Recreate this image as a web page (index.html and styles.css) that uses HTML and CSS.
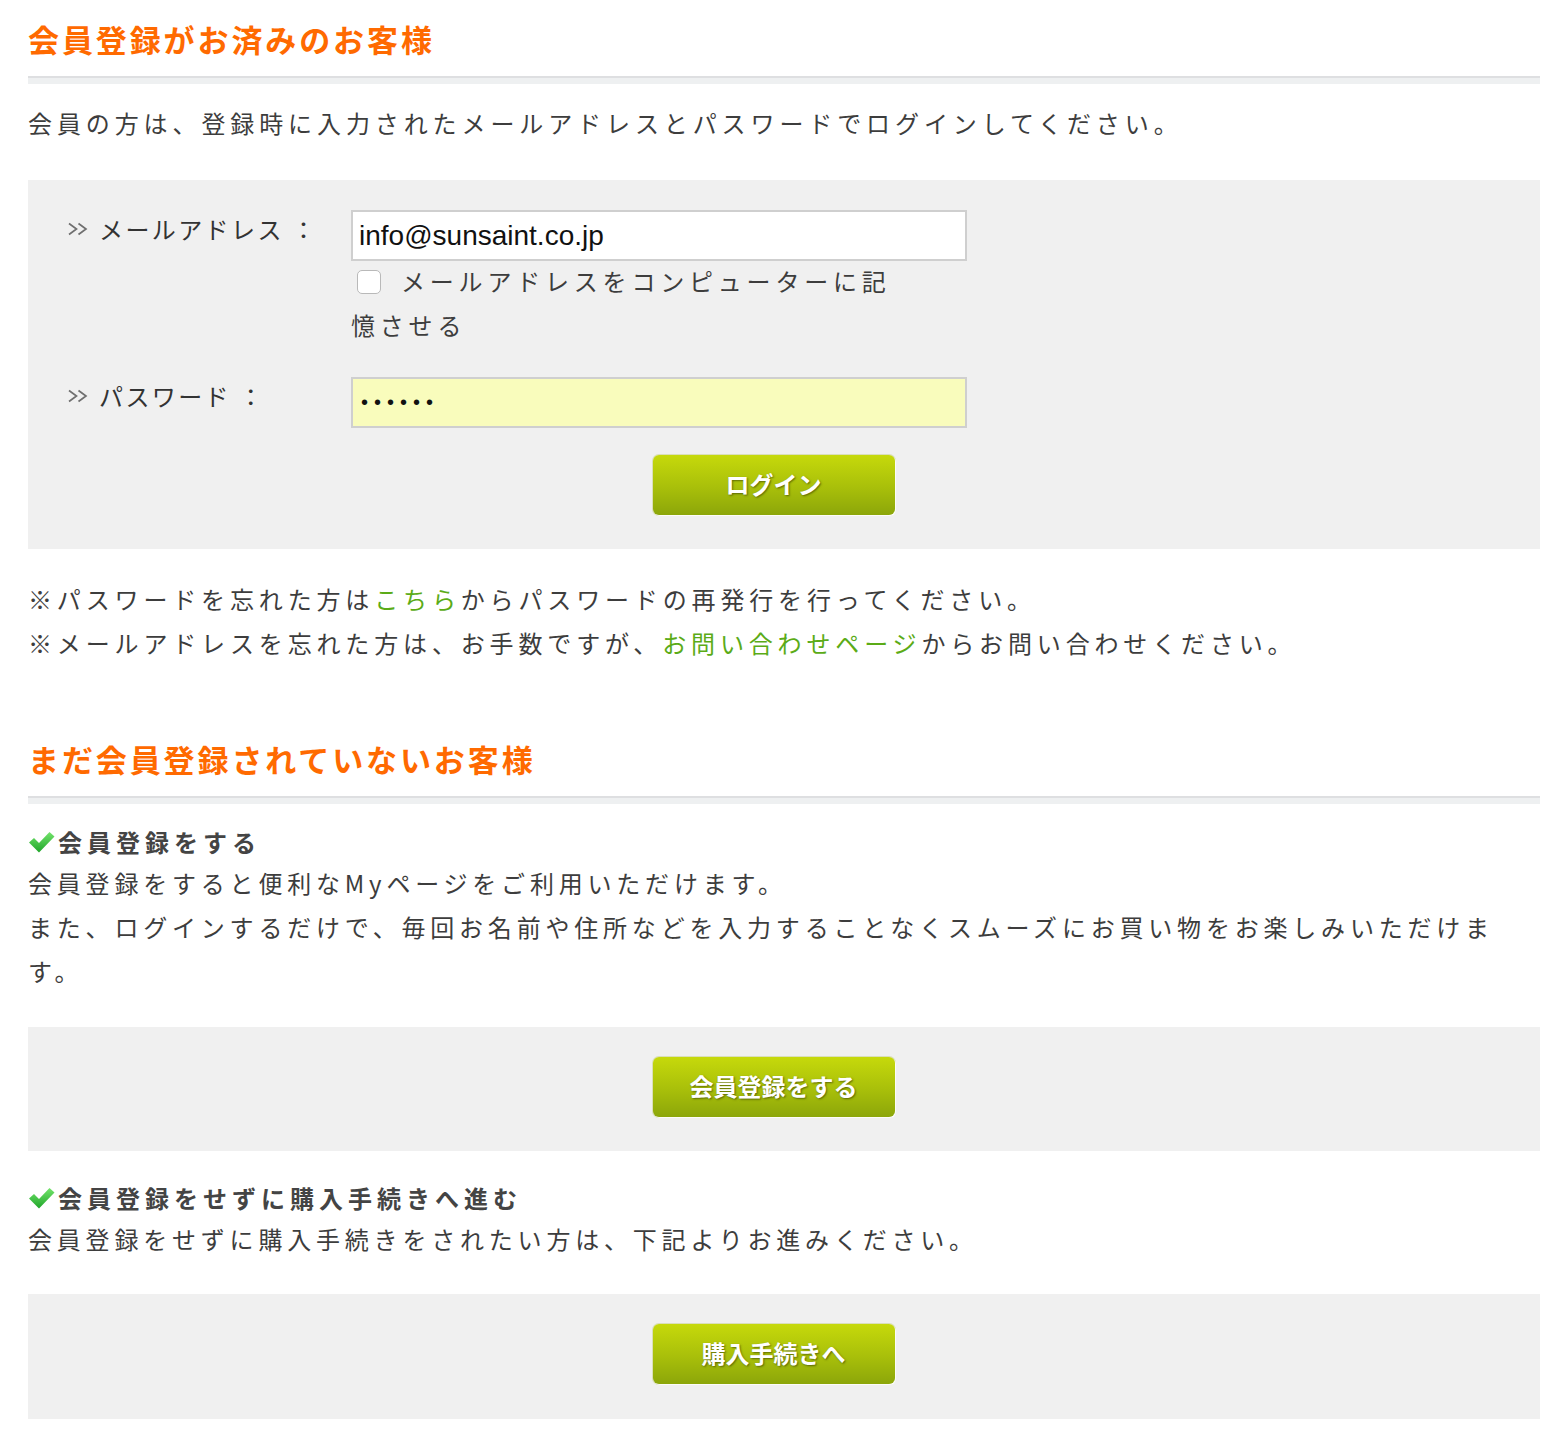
FILE: index.html
```html
<!DOCTYPE html>
<html lang="ja">
<head>
<meta charset="utf-8">
<title>ログイン</title>
<link rel="stylesheet" href="styles.css">
</head>
<body>
<div class="page">
  <h2 class="section-title first">会員登録がお済みのお客様</h2>
  <div class="rule"></div>
  <p class="intro">会員の方は、登録時に入力されたメールアドレスとパスワードでログインしてください。</p>

  <form class="panel login-panel">
    <div class="form-grid">
      <div class="label">
        <svg class="chev" width="22" height="16" viewBox="0 0 22 16"><path d="M1 2.5 L8.5 8 L1 13.5 M10.5 2.5 L18 8 L10.5 13.5" fill="none" stroke="#6f6f6f" stroke-width="1.7"/></svg>
        <span>メールアドレス ：</span>
      </div>
      <div class="field">
        <input class="text-input" type="text" value="info@sunsaint.co.jp">
        <label class="remember"><input class="check" type="checkbox">メールアドレスをコンピューターに記憶させる</label>
      </div>
      <div class="label second">
        <svg class="chev" width="22" height="16" viewBox="0 0 22 16"><path d="M1 2.5 L8.5 8 L1 13.5 M10.5 2.5 L18 8 L10.5 13.5" fill="none" stroke="#6f6f6f" stroke-width="1.7"/></svg>
        <span>パスワード ：</span>
      </div>
      <div class="field second">
        <input class="text-input pass" type="password" value="aaaaaa">
      </div>
    </div>
    <div class="btn-row"><button type="button" class="btn">ログイン</button></div>
  </form>

  <div class="notes">
    <p>※パスワードを忘れた方は<a href="#">こちら</a>からパスワードの再発行を行ってください。</p>
    <p>※メールアドレスを忘れた方は、お手数ですが、<a href="#">お問い合わせページ</a>からお問い合わせください。</p>
  </div>

  <h2 class="section-title second-title">まだ会員登録されていないお客様</h2>
  <div class="rule rule-second"></div>

  <h3 class="sub-title">
    <svg class="check-icon" width="27" height="24" viewBox="0 0 27 24"><defs><linearGradient id="g1" x1="0" y1="0" x2="0" y2="1"><stop offset="0" stop-color="#74e46c"/><stop offset="1" stop-color="#1fa52a"/></linearGradient></defs><path d="M1 12.5 L6 8 L11 13 L21.5 2 L26.5 6.5 L11 22.5 Z" fill="url(#g1)"/></svg>会員登録をする</h3>
  <p class="body-text">会員登録をすると便利なMyページをご利用いただけます。<br>また、ログインするだけで、毎回お名前や住所などを入力することなくスムーズにお買い物をお楽しみいただけます。</p>
  <div class="panel action-panel">
    <div class="btn-row"><button type="button" class="btn">会員登録をする</button></div>
  </div>

  <h3 class="sub-title after-panel">
    <svg class="check-icon" width="27" height="24" viewBox="0 0 27 24"><defs><linearGradient id="g2" x1="0" y1="0" x2="0" y2="1"><stop offset="0" stop-color="#74e46c"/><stop offset="1" stop-color="#1fa52a"/></linearGradient></defs><path d="M1 12.5 L6 8 L11 13 L21.5 2 L26.5 6.5 L11 22.5 Z" fill="url(#g2)"/></svg>会員登録をせずに購入手続きへ進む</h3>
  <p class="body-text">会員登録をせずに購入手続きをされたい方は、下記よりお進みください。</p>
  <div class="panel action-panel last">
    <div class="btn-row"><button type="button" class="btn">購入手続きへ</button></div>
  </div>
</div>
</body>
</html>
```

FILE: styles.css
```css
* { box-sizing: border-box; }
html, body { margin: 0; padding: 0; background: #fff; }
body {
  font-family: "Noto Sans CJK JP", "Noto Sans", sans-serif;
  color: #3d3d3d;
  font-size: 24px;
}
.page {
  width: 1512px;
  margin-left: 28px;
  padding-bottom: 32px;
}
p { margin: 0; }
.section-title {
  margin: 0;
  font-size: 31px;
  line-height: 42px;
  font-weight: bold;
  color: #ff6a00;
  letter-spacing: 2.9px;
}
.section-title.first { padding-top: 18px; }
.section-title.second-title { margin-top: 73px; }
.rule {
  height: 8px;
  margin-top: 16px;
  background: linear-gradient(#dedfe1 0, #dedfe1 2px, #eef0f1 2px);
}
.rule.rule-second { margin-top: 16px; }
.intro {
  margin-top: 17px;
  line-height: 44px;
  letter-spacing: 4.9px;
}
.panel { background: #f0f0f0; }
.login-panel {
  margin-top: 35px;
  padding: 30px 0 34px 40px;
}
.form-grid {
  display: grid;
  grid-template-columns: 283px 1fr;
}
.label {
  display: flex;
  align-items: center;
  height: 36px;
  letter-spacing: 2.4px;
  color: #333;
}
.label .chev { margin-right: 9px; flex: none; margin-top: 2px; }
.field.second { margin-top: 30px; }
.label.second { margin-top: 30px; }
.text-input {
  display: block;
  width: 616px;
  height: 51px;
  margin: 0;
  border: 2px solid #cfcfcf;
  background: #fff;
  padding: 0 6px;
  font-family: "Liberation Sans", Arial, sans-serif;
  font-size: 28px;
  color: #111;
  outline: none;
}
.text-input.pass {
  background: #f9fcbc;
  font-size: 20px;
  letter-spacing: 6px;
  padding-left: 8px;
}
.remember {
  display: block;
  width: 552px;
  margin-top: -2px;
  line-height: 44px;
  letter-spacing: 4.8px;
  color: #3d3d3d;
}
.check {
  -webkit-appearance: none;
  appearance: none;
  display: inline-block;
  width: 24px;
  height: 24px;
  margin: 0 20px 0 6px;
  vertical-align: -3px;
  border: 1.5px solid #b9b9b9;
  border-radius: 5px;
  background: #fff;
}
.btn-row {
  display: flex;
  justify-content: center;
}
.login-panel .btn-row { margin-top: 27px; padding-right: 61px; }
.btn {
  width: 242px;
  height: 60px;
  border: none;
  border-radius: 6px;
  background: linear-gradient(#c6d90b, #a8bf0a 55%, #8ca60a);
  box-shadow: 1px 1px 0 rgba(255,255,255,0.9), 0 0 0 1px rgba(150,170,20,0.25);
  color: #fff;
  font-family: "Noto Sans CJK JP", sans-serif;
  font-size: 24px;
  font-weight: bold;
  text-shadow: 1px 1px 2px rgba(60,70,0,0.7);
  cursor: pointer;
  padding: 0 0 3px;
}
.notes {
  margin-top: 28px;
  line-height: 44px;
  letter-spacing: 4.85px;
}
.notes a, .body-text a { color: #5bab17; text-decoration: none; }
.sub-title {
  margin: 19px 0 0;
  font-size: 24px;
  line-height: 38px;
  font-weight: bold;
  letter-spacing: 5px;
  color: #444;
  display: flex;
  align-items: center;
}
.sub-title .check-icon { margin-right: 3px; flex: none; }
.sub-title.after-panel { margin-top: 28px; }
.body-text {
  line-height: 44px;
  letter-spacing: 4.8px;
}
.action-panel {
  margin-top: 34px;
  padding: 30px 0 34px;
}
.action-panel.last { margin-top: 33px; padding-bottom: 35px; }
.action-panel .btn-row { padding-right: 21px; }
```
